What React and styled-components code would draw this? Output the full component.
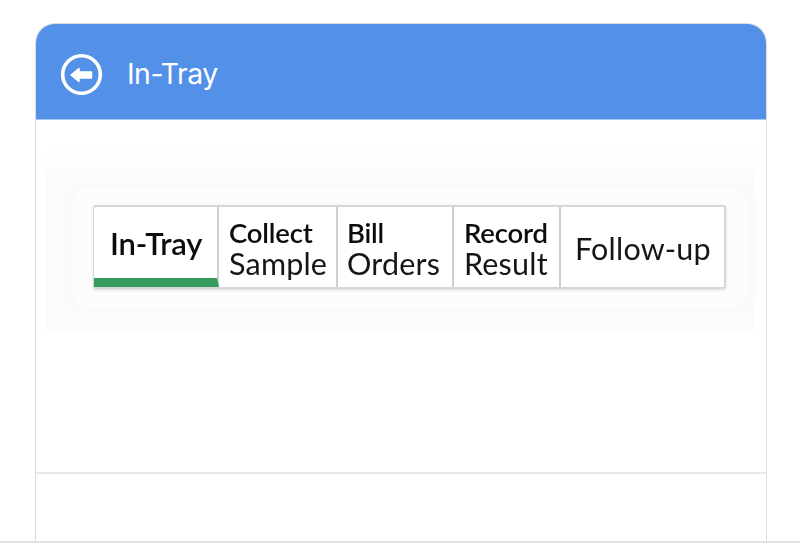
import React from 'react';
import styled, { createGlobalStyle } from 'styled-components';

const Global = createGlobalStyle`
	html, body {
		margin: 0;
		padding: 0;
		background: #fff;
	}
	* {
		box-sizing: border-box;
	}
`;

const Page = styled.div`
	width: 800px;
	height: 560px;
	padding-top: 23px;
	overflow: hidden;
`;

const Card = styled.div`
	width: 732px;
	height: 518px;
	margin-left: 35px;
	display: flex;
	flex-direction: column;
	border: 1px solid #dcdcdc;
	border-bottom: 0;
	border-radius: 20px 20px 0 0;
`;

const Header = styled.header`
	height: 96px;
	padding: 5px 0 0 24px;
	display: flex;
	align-items: center;
	gap: 25px;
	background: #5390e8;
	border-radius: 19px 19px 0 0;
	border-bottom: 1px solid #a9c6f0;
`;

const BackIcon = styled.svg`
	width: 42px;
	height: 42px;
	display: block;
`;

const Title = styled.h1`
	margin: -2px 0 0;
	font-family: 'Inter', 'Liberation Sans', sans-serif;
	font-size: 28.4px;
	font-weight: 400;
	color: #fff;
	letter-spacing: -0.5px;
`;

const Body = styled.div`
	height: 354px;
	padding: 23px 12px 0 10px;
	border-bottom: 2px solid #e8e8e8;
`;

const Shot = styled.div`
	height: 188px;
	padding: 44px 6px 0 27px;
	background: linear-gradient(#fff, #fbfbfb 22%, #fbfbfb 85%, #fcfcfc);
`;

const Halo = styled.div`
	height: 121px;
	padding: 18px 22px 0 20px;
	background: #fcfcfc;
	border-radius: 18px;
	box-shadow: 0 0 14px 6px #f9f9f9;
`;

const Tabs = styled.div`
	display: flex;
	height: 84px;
	background: #fff;
	border: 2px solid #d6d6d6;
	border-width: 2px 2px 2px 1px;
	border-radius: 3px;
	box-shadow: 0 1px 3px rgba(0, 0, 0, 0.12);
	filter: blur(0.35px);
`;

const Tab = styled.div`
	width: ${props => props.width}px;
	flex: none;
	display: flex;
	flex-direction: column;
	justify-content: center;
	padding-left: ${props => props.inset}px;
	padding-top: 2px;
	font-family: 'Lato', 'Liberation Sans', sans-serif;
	font-size: 30.5px;
	line-height: 31px;
	color: #161616;
	border-right: ${props => (props.last ? 'none' : '2px solid #cfcfcf')};
	border-bottom: ${props => (props.active ? '9px solid #359a5c' : 'none')};
	white-space: nowrap;
`;

const Strong = styled.span`
	font-size: ${props => (props.big ? 31 : 27.5)}px;
	font-weight: 600;
	letter-spacing: -0.2px;
	color: #0c0c0c;
`;

const Plain = styled.span`
	letter-spacing: 0.2px;
`;

const Footer = styled.div`
	flex: 1;
`;

const BottomRule = styled.div`
	height: 2px;
	background: #e2e2e2;
`;

const tabs = [
	{ width: 125, inset: 16, active: true, bold: 'In-Tray' },
	{ width: 119, inset: 10, bold: 'Collect', plain: 'Sample' },
	{ width: 116, inset: 9, bold: 'Bill', plain: 'Orders' },
	{ width: 107, inset: 10, bold: 'Record', plain: 'Result' },
	{ width: 163, inset: 14, last: true, plain: 'Follow-up' }
];

const App = () => (
	<Page>
		<Global />
		<Card>
			<Header>
				<BackIcon viewBox="0 0 42 42">
					<circle cx="21.5" cy="21.5" r="18.8" fill="none" stroke="#fff" strokeWidth="3.6" />
					<path d="M11 22 L19 15.5 V19 H31.5 V25 H19 V28.5 Z" fill="#fff" strokeLinejoin="round" stroke="#fff" strokeWidth="1.4" />
				</BackIcon>
				<Title>In-Tray</Title>
			</Header>
			<Body>
				<Shot>
					<Halo>
						<Tabs>
							{tabs.map(tab => (
								<Tab key={tab.width} width={tab.width} inset={tab.inset} active={tab.active} last={tab.last}>
									{tab.bold && <Strong big={tab.active}>{tab.bold}</Strong>}
									{tab.plain && <Plain>{tab.plain}</Plain>}
								</Tab>
							))}
						</Tabs>
					</Halo>
				</Shot>
			</Body>
			<Footer />
		</Card>
		<BottomRule />
	</Page>
);

export default App;
